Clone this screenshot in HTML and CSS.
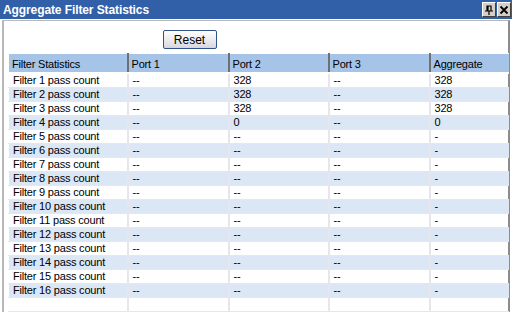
FILE: index.html
```html
<!DOCTYPE html>
<html lang="en">

<head>
    <meta charset="UTF-8">
    <title>Aggregate Filter Statistics</title>
    <link rel="stylesheet" href="styles.css">
</head>

<body>
    <div class="window">
        <div class="titlebar">
            <span class="title">Aggregate Filter Statistics</span>
            <div class="tools">
                <span class="tool">
                    <svg width="10" height="10" viewBox="0 0 10 10">
                        <path d="M3 1h4v5H3z M4 1v5 M1 6h8 M5 6v4" fill="none" stroke="#000" stroke-width="1.2"/>
                    </svg>
                </span>
                <span class="tool">
                    <svg width="10" height="10" viewBox="0 0 10 10">
                        <path d="M1.5 1.5l7 7M8.5 1.5l-7 7" stroke="#000" stroke-width="1.8"/>
                    </svg>
                </span>
            </div>
        </div>
        <div class="content">
            <div class="actions">
                <button class="btn">Reset</button>
            </div>
            <table class="stats">
                <colgroup>
                    <col class="c1">
                    <col class="c2">
                    <col class="c3">
                    <col class="c4">
                    <col class="c5">
                </colgroup>
                <thead>
                    <tr>
                        <th>Filter Statistics</th>
                        <th>Port 1</th>
                        <th>Port 2</th>
                        <th>Port 3</th>
                        <th>Aggregate</th>
                    </tr>
                </thead>
                <tbody>
                    <tr><td>Filter 1 pass count</td><td>--</td><td>328</td><td>--</td><td>328</td></tr>
                    <tr><td>Filter 2 pass count</td><td>--</td><td>328</td><td>--</td><td>328</td></tr>
                    <tr><td>Filter 3 pass count</td><td>--</td><td>328</td><td>--</td><td>328</td></tr>
                    <tr><td>Filter 4 pass count</td><td>--</td><td>0</td><td>--</td><td>0</td></tr>
                    <tr><td>Filter 5 pass count</td><td>--</td><td>--</td><td>--</td><td>-</td></tr>
                    <tr><td>Filter 6 pass count</td><td>--</td><td>--</td><td>--</td><td>-</td></tr>
                    <tr><td>Filter 7 pass count</td><td>--</td><td>--</td><td>--</td><td>-</td></tr>
                    <tr><td>Filter 8 pass count</td><td>--</td><td>--</td><td>--</td><td>-</td></tr>
                    <tr><td>Filter 9 pass count</td><td>--</td><td>--</td><td>--</td><td>-</td></tr>
                    <tr><td>Filter 10 pass count</td><td>--</td><td>--</td><td>--</td><td>-</td></tr>
                    <tr><td>Filter 11 pass count</td><td>--</td><td>--</td><td>--</td><td>-</td></tr>
                    <tr><td>Filter 12 pass count</td><td>--</td><td>--</td><td>--</td><td>-</td></tr>
                    <tr><td>Filter 13 pass count</td><td>--</td><td>--</td><td>--</td><td>-</td></tr>
                    <tr><td>Filter 14 pass count</td><td>--</td><td>--</td><td>--</td><td>-</td></tr>
                    <tr><td>Filter 15 pass count</td><td>--</td><td>--</td><td>--</td><td>-</td></tr>
                    <tr><td>Filter 16 pass count</td><td>--</td><td>--</td><td>--</td><td>-</td></tr>
                    <tr><td></td><td></td><td></td><td></td><td></td></tr>
                    <tr><td></td><td></td><td></td><td></td><td></td></tr>
                </tbody>
            </table>
        </div>
    </div>
</body>

</html>
```

FILE: styles.css
```css
body {
    margin: 0;
    padding: 0;
    font-family: "Liberation Sans", Arial, sans-serif;
    font-size: 11px;
    background: #fff;
    overflow: hidden;
}

.window {
    width: 512px;
    height: 312px;
    overflow: hidden;
}

.titlebar {
    height: 19px;
    background-color: #3160a8;
    display: flex;
    align-items: center;
    justify-content: space-between;
    padding: 0 1px 0 3px;
    box-sizing: border-box;
}

.title {
    color: #fff;
    font-weight: bold;
    font-size: 12px;
    letter-spacing: -0.1px;
}

.tools {
    display: flex;
    gap: 1px;
}

.tool {
    width: 12px;
    height: 13px;
    background: #d4d0c8;
    border: 1px solid;
    border-color: #fff #404040 #404040 #fff;
    display: flex;
    align-items: center;
    justify-content: center;
}

.content {
    margin: 1px 2px 0 2px;
    border-top: 1px solid #b8b8b8;
    border-left: 2px solid #b8b8b8;
    border-right: 2px solid #8c8c8c;
    height: 300px;
    padding: 0 1px 0 4px;
}

.actions {
    height: 32px;
    display: flex;
    justify-content: center;
    align-items: flex-start;
    padding-top: 9px;
    box-sizing: border-box;
    padding-right: 136px;
}

.btn {
    width: 54px;
    height: 19px;
    font-family: "Liberation Sans", Arial, sans-serif;
    font-size: 12px;
    border: 1px solid #32528c;
    border-radius: 2px;
    background: linear-gradient(#ffffff, #e8e8ee 60%, #d6d6de);
    padding: 0;
    color: #000;
}

.stats {
    border-collapse: collapse;
    width: 500px;
    table-layout: fixed;
    border-top: 1px solid #a0a0a0;
    border-left: 1px solid #a0a0a0;
    letter-spacing: -0.2px;
}

.c1 { width: 119px; }
.c2 { width: 101px; }
.c3 { width: 100px; }
.c4 { width: 101px; }
.c5 { width: 79px; }

.stats th {
    background: #a6c4e8;
    font-weight: normal;
    text-align: left;
    height: 17px;
    padding: 1px 0 0 3px;
    border-left: 2px solid #707070;
    border-bottom: 2px solid #ffffff;
    border-top: 1px solid #fff;
}

.stats th:first-child {
    border-left: 1px solid #fff;
}

.stats td {
    height: 13px;
    padding: 0 0 0 4px;
    border-left: 2px solid #e6e6ec;
    border-bottom: 1px solid #e6e6ec;
    white-space: nowrap;
    line-height: 13px;
}

.stats td:first-child {
    border-left: 1px solid #fff;
}

.stats tbody tr:nth-child(even) td {
    background: #dce7f5;
}
```
